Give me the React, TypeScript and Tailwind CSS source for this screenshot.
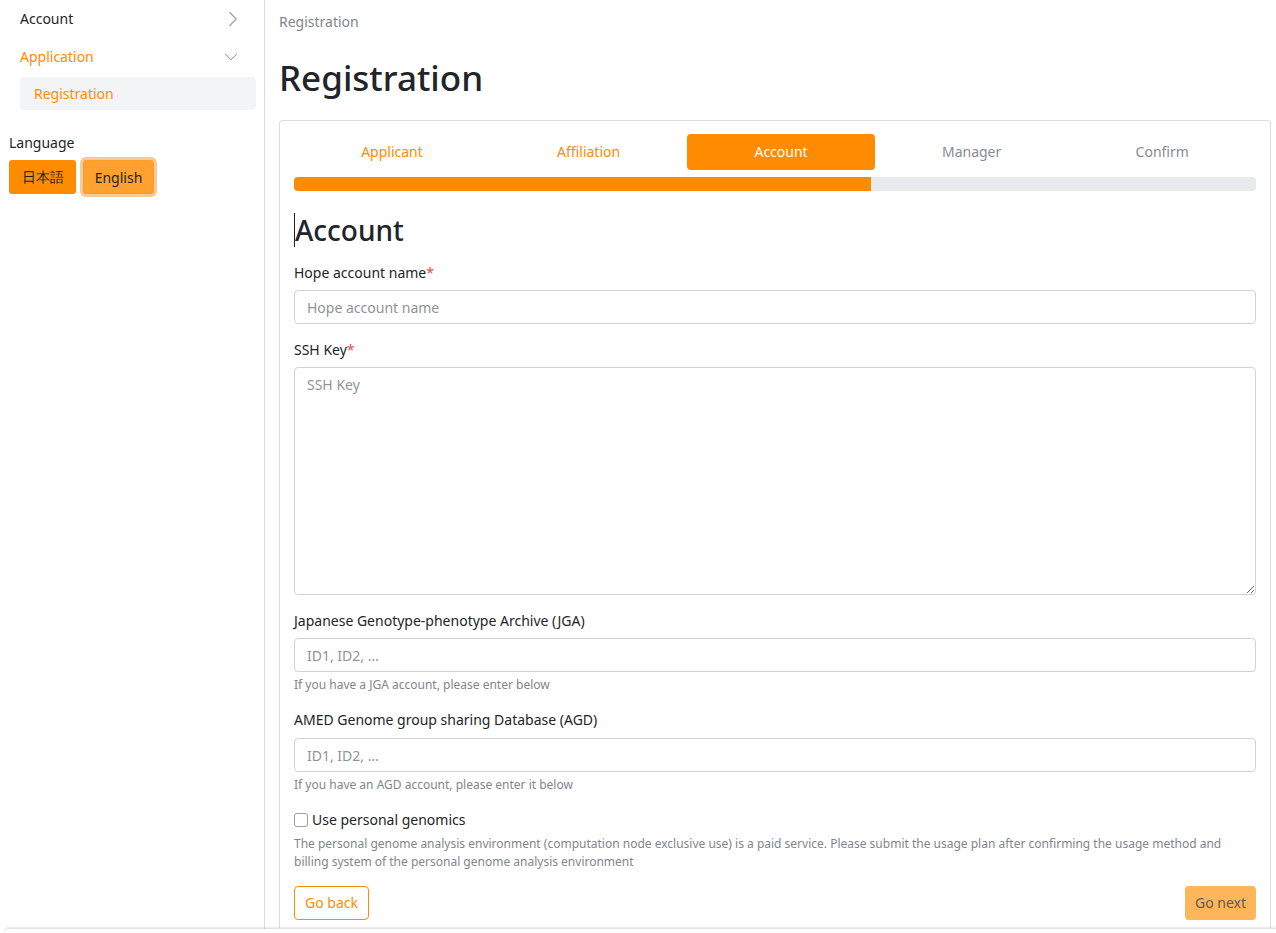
import React from "react";
import { ChevronRight, ChevronDown } from "lucide-react";

const steps = [
  { label: "Applicant", state: "done" },
  { label: "Affiliation", state: "done" },
  { label: "Account", state: "active" },
  { label: "Manager", state: "todo" },
  { label: "Confirm", state: "todo" },
];

export default function App() {
  return (
    <div className="flex min-h-[933px] bg-white font-['Noto_Sans',sans-serif] text-[#212529]">
      {/* Sidebar */}
      <aside className="w-[265px] shrink-0 border-r border-[#d9dce0] pr-2">
        <div className="flex h-[38px] items-center justify-between pl-5 pr-[10px] text-sm">
          <span>Account</span>
          <ChevronRight size={26} strokeWidth={1} className="text-[#9a9ea4]" />
        </div>
        <div className="flex h-[37px] items-center justify-between pl-5 pr-[14px] text-sm text-[#ff8c00]">
          <span>Application</span>
          <ChevronDown size={22} strokeWidth={1.1} className="text-[#9a9ea4]" />
        </div>
        <div className="ml-5 mt-[2px] flex h-[33px] items-center rounded bg-[#f3f4f6] pl-[14px] text-sm text-[#ff8c00]">
          Registration
        </div>
        <div className="mt-[23px] pl-[9px] text-sm leading-5">Language</div>
        <div className="mt-[7px] flex gap-[7px] pl-[9px]">
          <button className="h-[34px] w-[67px] rounded-[3px] bg-[#ff8c00] text-sm text-[#212529]">日本語</button>
          <button className="h-[34px] w-[71px] rounded-[3px] border border-[#ff9d26] bg-[#ffa12e] pt-[2px] text-sm text-[#212529] shadow-[0_0_0_3px_rgba(230,160,70,0.55)]">
            English
          </button>
        </div>
      </aside>

      {/* Main */}
      <main className="flex-1 pl-[14px] pr-[5px] pt-3">
        <div className="text-sm leading-5 text-[#80868d]">Registration</div>
        <h1 className="mt-6 text-[35px] font-medium leading-[43px] text-[#212529]">Registration</h1>

        <div className="mt-[21px] rounded-t border border-b-0 border-[#dcdee2] px-[14px] pt-[13px] pb-2">
          <div className="flex">
            {steps.map((s) => (
              <div
                key={s.label}
                className={
                  "flex h-9 flex-auto items-center justify-center rounded text-sm " +
                  (s.state === "active"
                    ? "bg-[#ff8c00] text-white"
                    : s.state === "done"
                    ? "text-[#ff8c00]"
                    : "text-[#868c94]")
                }
              >
                {s.label}
              </div>
            ))}
          </div>
          <div className="mt-[7px] h-[14px] overflow-hidden rounded bg-[#e9eaee]">
            <div className="h-full w-[60%] bg-[#ff8c00]" />
          </div>

          <h2 className="mt-[22px] border-l border-[#222] text-[28px] font-medium leading-[34px]">Account</h2>

          <label className="mt-[16px] block text-sm leading-5">
            Hope account name<span className="text-[#e5484d]">*</span>
          </label>
          <input
            placeholder="Hope account name"
            className="mt-[7px] block h-[34px] w-full rounded border border-[#cfd3d8] px-3 text-sm outline-none placeholder:text-[#8e949b]"
          />

          <label className="mt-[16px] block text-sm leading-5">
            SSH Key<span className="text-[#e5484d]">*</span>
          </label>
          <textarea
            placeholder="SSH Key"
            className="mt-[7px] block h-[228px] w-full rounded border border-[#cfd3d8] px-3 py-[7px] text-sm outline-none placeholder:text-[#8e949b]"
          />

          <label className="mt-[16px] block text-sm leading-5">Japanese Genotype-phenotype Archive (JGA)</label>
          <input
            placeholder="ID1, ID2, …"
            className="mt-[7px] block h-[34px] w-full rounded border border-[#cfd3d8] px-3 text-sm outline-none placeholder:text-[#8e949b]"
          />
          <div className="mt-1 text-xs leading-[18px] text-[#80868d]">If you have a JGA account, please enter below</div>

          <label className="mt-[16px] block text-sm leading-5">AMED Genome group sharing Database (AGD)</label>
          <input
            placeholder="ID1, ID2, …"
            className="mt-[8px] block h-[34px] w-full rounded border border-[#cfd3d8] px-3 text-sm outline-none placeholder:text-[#8e949b]"
          />
          <div className="mt-1 text-xs leading-[18px] text-[#80868d]">If you have an AGD account, please enter it below</div>

          <label className="mt-4 flex h-5 items-center gap-[4px] text-sm">
            <span className="block h-[14px] w-[14px] rounded-[3px] border border-[#9aa0a6] bg-white" />
            Use personal genomics
          </label>
          <p className="mt-[5px] text-xs leading-[18px] text-[#80868d]">
            The personal genome analysis environment (computation node exclusive use) is a paid service. Please submit the usage plan after confirming the usage method and billing system of the personal genome analysis environment
          </p>

          <div className="mt-[15px] flex justify-between">
            <button className="h-[34px] rounded border border-[#ff8c00] px-[10px] text-sm text-[#ff8c00]">Go back</button>
            <button className="h-[34px] rounded bg-[#ffb55a] px-[10px] text-sm text-[#5f5a55]">Go next</button>
          </div>
        </div>
      </main>

      <div className="fixed bottom-0 left-[5px] right-0 h-[4px] rounded-tl-lg bg-white shadow-[0_-1px_3px_rgba(0,0,0,0.18)]" />
    </div>
  );
}
